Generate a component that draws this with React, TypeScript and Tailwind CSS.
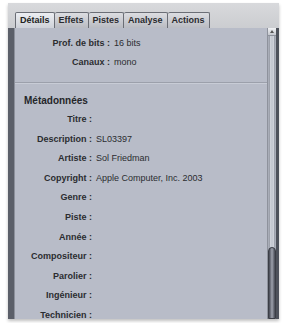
import React from "react";

const font = { fontFamily: '"Liberation Sans", "DejaVu Sans", Arial, sans-serif' };

const tabs = ["Détails", "Effets", "Pistes", "Analyse", "Actions"];

const infoRows = [
  { label: "Prof. de bits :", value: "16 bits" },
  { label: "Canaux :", value: "mono" },
];

const metaRows = [
  { label: "Titre :", value: "" },
  { label: "Description :", value: "SL03397" },
  { label: "Artiste :", value: "Sol Friedman" },
  { label: "Copyright :", value: "Apple Computer, Inc. 2003" },
  { label: "Genre :", value: "" },
  { label: "Piste :", value: "" },
  { label: "Année :", value: "" },
  { label: "Compositeur :", value: "" },
  { label: "Parolier :", value: "" },
  { label: "Ingénieur :", value: "" },
  { label: "Technicien :", value: "" },
];

const Row = ({ label, value }: { label: string; value: string }) => (
  <div className="flex items-center h-[19.6px] text-[9px] shrink-0">
    <div className="w-[77px] text-right font-bold text-[#2b2c30] shrink-0">{label}</div>
    <div className="ml-[4px] text-[#2b2c30]">{value}</div>
  </div>
);

export default function App() {
  return (
    <div className="w-[282px] h-[323px] bg-white overflow-hidden" style={font}>
      <div className="ml-[8px] mt-[3px] w-[271px] h-[316px] flex flex-col bg-gradient-to-b from-[#d8d9dc] via-[#8a8d95] to-[#6f727b] shadow-[0_2px_3px_rgba(0,0,0,0.25)]">
        {/* tab bar */}
        <div className="h-[25px] flex items-end pl-[7px] shrink-0">
          {tabs.map((t, i) => (
            <div
              key={t}
              className={
                i === 0
                  ? "h-[16px] px-[4px] flex items-center text-[9px] font-bold text-[#222] bg-gradient-to-b from-[#eceef2] to-[#cfd2d9] border border-b-0 border-[#6b6e76] rounded-t-[2px]"
                  : "h-[16px] px-[4px] flex items-center text-[9px] font-bold text-[#2a2b2f] bg-gradient-to-b from-[#dcdde1] to-[#b9bbc2] border border-b-0 border-l-0 border-[#6b6e76] rounded-t-[2px]"
              }
            >
              {t}
            </div>
          ))}
        </div>
        {/* body */}
        <div className="flex flex-1 min-h-0 bg-[#5b5f69] pl-[6px]">
          <div className="flex-1 flex flex-col bg-[#b8bcc8] overflow-hidden border-l border-[#8c909b]">
            <div className="pt-[6px]">
              {infoRows.map((r) => (
                <div key={r.label} className="flex items-center h-[19px] text-[9px]">
                  <div className="w-[95px] text-right font-bold text-[#2b2c30]">{r.label}</div>
                  <div className="ml-[4px] text-[#2b2c30]">{r.value}</div>
                </div>
              ))}
            </div>
            <div className="mt-[10px] h-[2px] border-t border-[#9ca0ab] border-b border-b-[#c8ccd6] shrink-0" />
            <div className="mt-[7px] h-[19px] flex items-center pl-[9px] text-[10px] font-bold text-[#25262a] shrink-0">
              Métadonnées
            </div>
            {metaRows.map((r) => (
              <Row key={r.label} label={r.label} value={r.value} />
            ))}
          </div>
          {/* scrollbar */}
          <div className="w-[9px] flex flex-col bg-[#a9adb8] border-l border-[#8e929c]">
            <div className="h-[8px] bg-gradient-to-b from-[#f2f3f5] to-[#c4c7ce] border-b border-[#8e929c] flex items-center justify-center">
              <div className="w-0 h-0 border-l-[2.5px] border-r-[2.5px] border-b-[3px] border-l-transparent border-r-transparent border-b-[#555]" />
            </div>
            <div className="flex-1 mx-[1px] bg-gradient-to-r from-[#d3d6dd] via-[#c1c5ce] to-[#d3d6dd] border-x border-[#9da1ab]" />
            <div className="h-[72px] rounded-t-[4px] bg-gradient-to-r from-[#454852] via-[#9ea2ad] to-[#454852] border border-[#3b3e46]" />
          </div>
          <div className="w-[3px] bg-[#4e525b]" />
        </div>
      </div>
    </div>
  );
}
